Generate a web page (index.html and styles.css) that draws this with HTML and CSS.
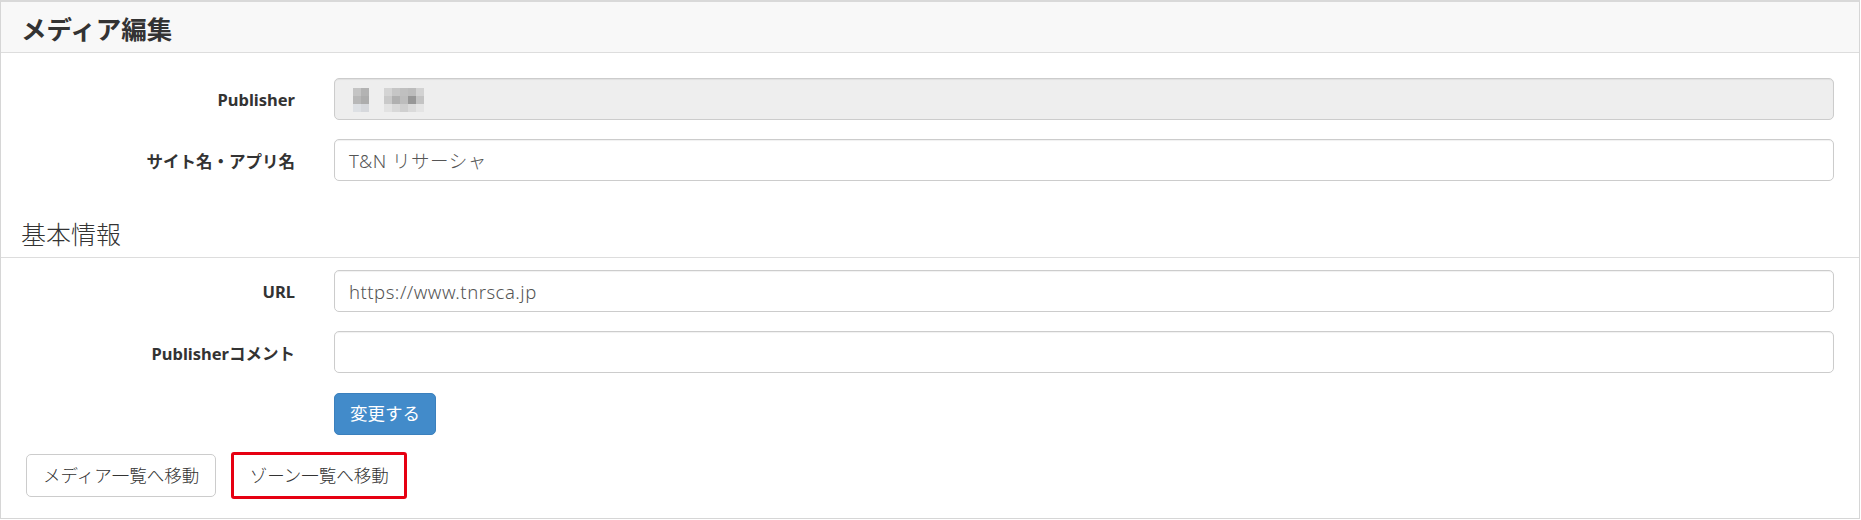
FILE: index.html
```html
<!DOCTYPE html>
<html lang="ja">
<head>
<meta charset="utf-8">
<title>メディア編集</title>
<link rel="stylesheet" href="styles.css">
</head>
<body>
<div class="panel">
  <div class="panel-heading">
    <h2 class="panel-title">メディア編集</h2>
  </div>
  <div class="panel-body">
    <div class="form-row first">
      <label class="form-label">Publisher</label>
      <div class="form-control disabled">
        <svg class="mosaic" width="72" height="24" viewBox="0 0 72 24">
          <rect x="0" y="0" width="8" height="8" fill="#c4c4c4"/>
          <rect x="8" y="0" width="8" height="8" fill="#b3b3b3"/>
          <rect x="0" y="8" width="8" height="8" fill="#b8b8b8"/>
          <rect x="8" y="8" width="8" height="8" fill="#adadad"/>
          <rect x="0" y="16" width="8" height="8" fill="#dde0e4"/>
          <rect x="8" y="16" width="8" height="8" fill="#d6d8dc"/>
          <rect x="31" y="0" width="8" height="8" fill="#d4d4d4"/>
          <rect x="39" y="0" width="8" height="8" fill="#c6c6c6"/>
          <rect x="47" y="0" width="8" height="8" fill="#c0c0c0"/>
          <rect x="55" y="0" width="8" height="8" fill="#bcbcbc"/>
          <rect x="63" y="0" width="8" height="8" fill="#d2d2d2"/>
          <rect x="31" y="8" width="8" height="8" fill="#c9c9c9"/>
          <rect x="39" y="8" width="8" height="8" fill="#b0b0b0"/>
          <rect x="47" y="8" width="8" height="8" fill="#bdbdbd"/>
          <rect x="55" y="8" width="8" height="8" fill="#979797"/>
          <rect x="63" y="8" width="8" height="8" fill="#c3c3c3"/>
          <rect x="31" y="16" width="8" height="8" fill="#e2e2e2"/>
          <rect x="39" y="16" width="8" height="8" fill="#d8d8d8"/>
          <rect x="47" y="16" width="8" height="8" fill="#cfcfcf"/>
          <rect x="55" y="16" width="8" height="8" fill="#dadada"/>
          <rect x="63" y="16" width="8" height="8" fill="#e4e4e4"/>
        </svg>
      </div>
    </div>
    <div class="form-row">
      <label class="form-label">サイト名・アプリ名</label>
      <div class="form-control">T&amp;N リサーシャ</div>
    </div>

    <h3 class="section-title">基本情報</h3>

    <div class="form-row after-section">
      <label class="form-label">URL</label>
      <div class="form-control">https://www.tnrsca.jp</div>
    </div>
    <div class="form-row">
      <label class="form-label">Publisherコメント</label>
      <div class="form-control"></div>
    </div>
    <div class="form-row submit-row">
      <span class="form-label"></span>
      <button class="btn btn-primary">変更する</button>
    </div>

    <div class="nav-buttons">
      <button class="btn btn-default">メディア一覧へ移動</button>
      <button class="btn btn-default btn-highlight">ゾーン一覧へ移動</button>
    </div>
  </div>
</div>
</body>
</html>
```

FILE: styles.css
```css
* {
  box-sizing: border-box;
}

body {
  margin: 0;
  background: #ffffff;
  font-family: "Noto Sans", "Noto Sans CJK JP", sans-serif;
  color: #333333;
}

.panel {
  width: 1860px;
  height: 519px;
  border: 1px solid #d6d6d6;
  border-top: 2px solid #d9d9d9;
  background: #ffffff;
  display: flex;
  flex-direction: column;
}

.panel-heading {
  height: 51px;
  background: #f8f8f8;
  border-bottom: 1px solid #dddddd;
  padding-left: 20px;
  display: flex;
  align-items: center;
}

.panel-title {
  margin: 0;
  font-family: "Noto Sans CJK JP", sans-serif;
  font-size: 25.5px;
  font-weight: 700;
  line-height: 1;
  color: #333333;
  padding-top: 1px;
}

.panel-body {
  display: flex;
  flex-direction: column;
  padding-bottom: 18px;
}

.form-row {
  display: flex;
  align-items: center;
  height: 42px;
  margin-top: 19px;
}

.form-row.first {
  margin-top: 25px;
}

.form-row.after-section {
  margin-top: 12px;
}

.form-row.submit-row {
  margin-top: 20px;
}

.form-label {
  width: 294px;
  margin-right: 39px;
  text-align: right;
  font-size: 16.5px;
  font-weight: 700;
  color: #333333;
  padding-top: 1px;
}

.form-control {
  width: 1500px;
  height: 42px;
  border: 1px solid #cccccc;
  border-radius: 5px;
  padding: 0 14px;
  display: flex;
  align-items: center;
  font-size: 18.5px;
  font-weight: 300;
  letter-spacing: 0.5px;
  color: #555555;
  background: #ffffff;
  box-shadow: inset 0 1px 1px rgba(0, 0, 0, 0.06);
}

.form-control.disabled {
  background: #eeeeee;
  padding-left: 18px;
}

.mosaic {
  display: block;
  margin-top: 1px;
}

.section-title {
  margin: 34px 0 0 0;
  padding: 0 0 6px 20px;
  font-family: "Noto Sans CJK JP", sans-serif;
  font-size: 25px;
  font-weight: 300;
  line-height: 36px;
  color: #333333;
  border-bottom: 1px solid #dddddd;
}

.btn {
  font-family: "Noto Sans CJK JP", sans-serif;
  font-size: 17.5px;
  font-weight: 300;
  line-height: 1;
  border-radius: 5px;
  cursor: pointer;
}

.btn-primary {
  width: 102px;
  height: 42px;
  padding: 0 0 2px 0;
  background: #428bca;
  border: 1px solid #3b80bd;
  color: #ffffff;
  font-weight: 400;
}

.nav-buttons {
  display: flex;
  align-items: center;
  gap: 15px;
  margin-top: 17px;
  padding-left: 25px;
  height: 47px;
}

.btn-default {
  height: 43px;
  padding: 0 16px 2px 16px;
  background: #ffffff;
  border: 1px solid #cccccc;
  color: #333333;
}

.btn-highlight {
  height: 47px;
  width: 176px;
  padding: 0 0 2px 0;
  border: 3px solid #e60012;
  border-radius: 3px;
}
```
